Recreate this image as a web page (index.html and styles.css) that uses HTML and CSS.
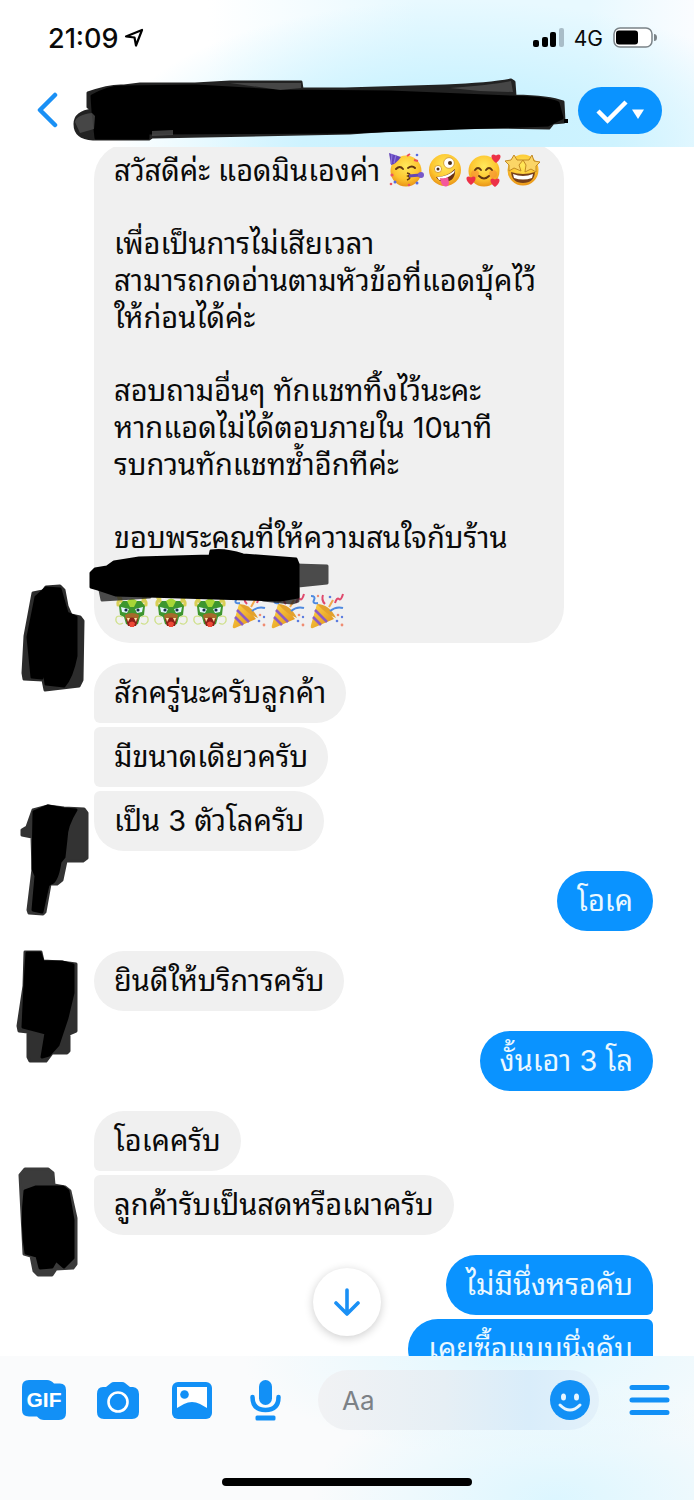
FILE: index.html
```html
<!DOCTYPE html>
<html lang="th">
<head>
<meta charset="utf-8">
<meta name="viewport" content="width=device-width, initial-scale=1">
<title>Chat</title>
<link rel="stylesheet" href="styles.css">
</head>
<body>
<svg class="defs" aria-hidden="true">
  <defs>
    <radialGradient id="gold" cx=".5" cy=".35" r=".7"><stop offset="0" stop-color="#ffe95c"/><stop offset=".6" stop-color="#fdc52f"/><stop offset="1" stop-color="#e58a12"/></radialGradient>
    <linearGradient id="cone" x1="0" y1="0" x2="1" y2="1"><stop offset="0" stop-color="#ffd84a"/><stop offset="1" stop-color="#dd8b16"/></linearGradient>
    <path id="heart" d="M0 5C-7 0-5-6 0-2.500C5-6 7 0 0 5Z" fill="#ec3148"/>
    <symbol id="face-party" viewBox="0 0 36 36">
      <circle cx="18" cy="19" r="15.500" fill="url(#gold)"/>
      <path d="M1 1L13 5Q8 12 3 13Z" fill="#6545ba"/><path d="M4 2L3 12M8 3L6 11" stroke="#8a74e0" stroke-width="1.200"/>
      <path d="M8 17q4-4 7 0M20 16q4-3 7 0" fill="none" stroke="#623611" stroke-width="2" stroke-linecap="round"/>
      <path d="M19 21q5 1 1 3q4 2-1 4" fill="none" stroke="#623611" stroke-width="1.600"/>
      <path d="M21 24L32 23" stroke="#6648b3" stroke-width="3"/><circle cx="33" cy="23" r="3" fill="#7658c9"/>
      <path d="M19 4l3-2M26 8l4 1" stroke="#ee4e57" stroke-width="2"/>
      <g fill="#576be0"><circle cx="29" cy="3" r="1.300"/><circle cx="7" cy="30" r="1.500"/><circle cx="29" cy="31" r="1.500"/></g>
      <g fill="#ed5362"><circle cx="4" cy="23" r="1.600"/><circle cx="3" cy="32" r="1.300"/><circle cx="21" cy="33" r="1.300"/></g>
    </symbol>
    <symbol id="face-zany" viewBox="0 0 36 36">
      <circle cx="18" cy="18" r="16" fill="url(#gold)"/>
      <circle cx="22" cy="11" r="5.400" fill="#fff" stroke="#d9a339"/><circle cx="11" cy="17" r="3.600" fill="#fff" stroke="#d9a339"/>
      <circle cx="23" cy="11" r="2" fill="#4b2c16"/><circle cx="11" cy="17" r="1.500" fill="#4b2c16"/>
      <path d="M9 25Q20 25 28 17Q29 29 18 30Q12 30 9 25Z" fill="#6b3214"/><path d="M10 25Q20 25 28 18L27 21Q20 27 12 28Z" fill="#fff"/>
      <path d="M13 26Q18 27 21 25L22 31Q21 36 17 34Q14 33 13 26Z" fill="#f4589c"/>
    </symbol>
    <symbol id="face-hearts" viewBox="0 0 36 36">
      <circle cx="18" cy="19" r="15.500" fill="url(#gold)"/>
      <circle cx="9" cy="22" r="4" fill="#f58a32" opacity=".6"/><circle cx="27" cy="22" r="4" fill="#f58a32" opacity=".6"/>
      <path d="M9 18q3-4 6 0M20 18q3-4 6 0M13 24q5 5 10 0" fill="none" stroke="#623611" stroke-width="1.900" stroke-linecap="round"/>
      <use href="#heart" x="30" y="6"/><use href="#heart" x="5" y="28"/><use href="#heart" x="29" y="30"/>
    </symbol>
    <symbol id="face-stars" viewBox="0 0 36 36">
      <circle cx="18" cy="18" r="15.500" fill="url(#gold)"/>
      <path d="M9 3l3 5 6 0-4 5 2 6-7-3-5 3 0-6-4-4 6-1ZM27 3l2 6 6 1-4 4 0 6-5-3-6 3 1-7-3-5 6 0Z" fill="#fbd566" stroke="#c28a25" stroke-width="1"/>
      <path d="M6 20Q18 24 30 20Q29 31 18 31Q7 31 6 20Z" fill="#77401b"/><path d="M8 22Q18 26 28 22L27 26Q18 29 9 26Z" fill="#fff"/>
    </symbol>
    <symbol id="dragon" viewBox="0 0 36 36">
      <path d="M4 2q1 7 8 9M32 2q-1 7-8 9M8 5q-5 3-4 7l7 1M28 5q5 3 4 7l-7 1" fill="none" stroke="#d9cf57" stroke-width="3"/>
      <path d="M9 8H27L31 13 30 22 26 24 24 31Q18 34 12 31L10 24 6 22 5 13Z" fill="#3d962f"/>
      <path d="M13 8Q18 3 23 8L20 14H16Z" fill="#a8d637"/>
      <path d="M7 14l8 2-2 4-5-1ZM29 14l-8 2 2 4 5-1Z" fill="#e3f6ff"/><circle cx="12" cy="17" r="1.600" fill="#172c4a"/><circle cx="24" cy="17" r="1.600" fill="#172c4a"/>
      <path d="M11 22q7-4 14 0l-1 5H12Z" fill="#a66a2a"/><path d="M12 26q6-3 12 0l-2 7h-8Z" fill="#8d1f18"/><path d="M13 25l1 4 2-4M20 25l2 4 1-4" fill="#ffe9a8"/><path d="M15 30q3-3 6 0l-1 4h-4Z" fill="#ee4936"/>
      <path d="M9 24q-8-3-7 4q2 5 7 2M27 24q8-3 7 4q-2 5-7 2" fill="none" stroke="#cfe08b" stroke-width="1.300"/>
    </symbol>
    <symbol id="popper" viewBox="0 0 36 36">
      <path d="M8 11Q17 15 25 26L4 35Q1 36 2 32Z" fill="url(#cone)"/>
      <path d="M6 17l12 12M4 24l8 8" stroke="#8d5bc0" stroke-width="2.600"/>
      <path d="M8 11Q20 11 27 25Q18 22 8 11Z" fill="#e3a12c"/>
      <path d="M2 3q5 0 3 4t4 3M21 18q6-5 13-3" fill="none" stroke="#4e8ae0" stroke-width="2"/>
      <path d="M14 2q-2 5 2 9M26 10q2-6 4-4t4-5" fill="none" stroke="#df496c" stroke-width="2"/>
      <path d="M20 14l4-7" stroke="#f0a74b" stroke-width="2"/>
      <g fill="#5c7ce0"><circle cx="21" cy="4" r="1.300"/><circle cx="28" cy="28" r="1.300"/><circle cx="33" cy="24" r="1.200"/></g><g fill="#ef8c72"><circle cx="29" cy="22" r="1.300"/><circle cx="33" cy="32" r="1.400"/><circle cx="9" cy="3" r="1.200"/></g>
    </symbol>
  </defs>
</svg>
<div class="app">
  <header class="header">
    <div class="status">
      <span class="clock">21:09</span>
      <svg class="locate" viewBox="0 0 20 20" aria-hidden="true"><path d="M2 8.500L18 2 12 17.500 10.500 9.500Z" fill="none" stroke="#000" stroke-width="2.200" stroke-linejoin="round"/></svg>
      <span class="spacer"></span>
      <svg class="signal" viewBox="0 0 32 20" aria-hidden="true"><rect y="12" width="6" height="7" rx="2"/><rect x="9" y="9" width="6" height="10" rx="2"/><rect x="17" y="4" width="6" height="15" rx="2"/><rect x="26" width="5" height="19" rx="2" fill="#a9bdc8"/></svg>
      <span class="network">4G</span>
      <svg class="battery" viewBox="0 0 44 22" aria-hidden="true"><rect x="1" y="1" width="38" height="19" rx="6" fill="#fff" stroke="#7b8388" stroke-width="1.500"/><rect x="3" y="3.500" width="22" height="14" rx="3"/><path d="M41 7q3 0 3 3.500T41 14Z" fill="#7b8388"/></svg>
    </div>
    <div class="nav">
      <button class="back" aria-label="Back"><svg viewBox="0 0 22 36"><path d="M18 3L3 18 18 33" fill="none" stroke="#1a90f5" stroke-width="4.500" stroke-linecap="round" stroke-linejoin="round"/></svg></button>
      <svg class="title-mark mark" viewBox="72 74 500 68" preserveAspectRatio="none" aria-hidden="true">
        <path d="M88 91Q110 83 124 84L140 82 195 82 230 80 301 80 302 87 345 87 445 84Q490 82 511 78L514 80 515 94Q550 95 563 100L564 120 553 121 549 126 500 125 420 126 350 131 152 135 149 137 93 137Q75 136 75 122Q75 110 93 108L88 105Z" fill="#222" stroke="#222"/>
        <path d="M92 94Q110 84 124 85L196 84 280 89 390 90 510 95Q550 96 558 101L562 116 548 123 350 130 148 131V136H96L93 109Z" fill="#000" stroke="#000"/>
        <path d="M75 120Q76 113 92 111L95 114 94 127 80 131ZM152 129L173 128V133L152 134ZM230 81L301 81V86L280 88ZM450 86Q490 83 511 79L513 90 480 89Z" fill="#555" opacity=".7"/>
        <path d="M564 117h4v4h-4Z"/>
      </svg>
      <button class="done" aria-label="Done"><svg viewBox="0 0 84 47"><path d="M20 24L29.500 33.500 48 15" fill="none" stroke="#fff" stroke-width="4.500"/><path d="M54 22.500H66L60 32Z" fill="#fff"/></svg></button>
    </div>
  </header>

  <main class="chat">
    <section class="group first">
      <div class="bubble long">
        <p>สวัสดีค่ะ แอดมินเองค่า <svg class="emoji" role="img" aria-label="🥳"><use href="#face-party"/></svg><svg class="emoji" role="img" aria-label="🤪"><use href="#face-zany"/></svg><svg class="emoji" role="img" aria-label="🥰"><use href="#face-hearts"/></svg><svg class="emoji" role="img" aria-label="🤩"><use href="#face-stars"/></svg></p>
        <p>เพื่อเป็นการไม่เสียเวลา<br>สามารถกดอ่านตามหัวข้อที่แอดบุ้คไว้<br>ให้ก่อนได้ค่ะ</p>
        <p>สอบถามอื่นๆ ทักแชททิ้งไว้นะคะ<br>หากแอดไม่ได้ตอบภายใน 10นาที<br>รบกวนทักแชทซ้ำอีกทีค่ะ</p>
        <p>ขอบพระคุณที่ให้ความสนใจกับร้าน<br><br><svg class="emoji" role="img" aria-label="🐲"><use href="#dragon"/></svg><svg class="emoji" role="img" aria-label="🐲"><use href="#dragon"/></svg><svg class="emoji" role="img" aria-label="🐲"><use href="#dragon"/></svg><svg class="emoji" role="img" aria-label="🎉"><use href="#popper"/></svg><svg class="emoji" role="img" aria-label="🎉"><use href="#popper"/></svg><svg class="emoji" role="img" aria-label="🎉"><use href="#popper"/></svg></p>
        <svg class="name-mark mark" viewBox="86 545 250 62" aria-hidden="true">
          <path d="M100 589H150V596L102 599ZM295 564L327 565V582L298 585ZM262 580H298V600L292 602 263 599Z" fill="#222" stroke="#222" opacity=".8"/>
          <path d="M91 572L95 568 107 566 114 561 139 557 210 555 211 550Q225 548 243 554L296 558 298 563 298 596 280 599 180 596 116 594 98 588 91 586Z" stroke="#000"/>
        </svg>
      </div>
      <svg class="avatar-mark mark" viewBox="0 568 94 140" aria-hidden="true"><path d="M33 592L43 590 46 586 60 585 64 589 67 605 71 614 80 616 83 620 82 679 79 685 45 689 43 679 24 678 23 672 25 635Z" fill="#2c2c2c" stroke="#2c2c2c"/><path d="M36 596L46 587 60 588 67 612 76 616 76 655Q72 676 64 685L46 683 44 666 42 677 32 676 28 636Z" stroke="#000"/></svg>
    </section>

    <section class="group">
      <div class="bubble top">สักครู่นะครับลูกค้า</div>
      <div class="bubble mid">มีขนาดเดียวครับ</div>
      <div class="bubble end">เป็น 3 ตัวโลครับ</div>
      <svg class="avatar-mark mark" viewBox="0 776 94 140" aria-hidden="true"><path d="M33 809L48 805 64 807 84 808 87 812 87 857 83 860 66 860 62 879 57 883 50 883 45 911 43 913 29 912 28 909 33 868 32 836 22 834V829L27 826Z" fill="#333" stroke="#333"/><path d="M34 811L48 805 64 808 76 809Q66 825 66 838L64 856 60 861Q57 881 51 882L48 884 42 911 33 909 36 875 33 868Z" stroke="#000"/></svg>
    </section>

    <section class="group mine"><div class="bubble">โอเค</div></section>

    <section class="group">
      <div class="bubble">ยินดีให้บริการครับ</div>
      <svg class="avatar-mark mark" viewBox="0 936 94 140" aria-hidden="true"><path d="M25 951H41L43 960 61 961 76 963V1030L69 1033V1050L67 1052 52 1052 46 1060 30 1060 28 1056 28 1031 19 1030 18 1025 24 985Z" fill="#303030" stroke="#303030"/><path d="M27 952H40L43 961H62L73 964V992L67 1017 58 1044 49 1054 42 1056 46 1032 23 1026 25 983Z" stroke="#000"/></svg>
    </section>

    <section class="group mine"><div class="bubble">งั้นเอา 3 โล</div></section>

    <section class="group">
      <div class="bubble top">โอเคครับ</div>
      <div class="bubble end">ลูกค้ารับเป็นสดหรือเผาครับ</div>
      <svg class="avatar-mark mark" viewBox="0 1161 94 140" aria-hidden="true"><path d="M25 1169H48L53 1173 54 1185 65 1187 70 1191 76 1218 76 1264 73 1268 56 1269 52 1275 38 1275 34 1271 31 1256 24 1254 20 1175Z" fill="#3b3b3b" stroke="#3b3b3b"/><path d="M25 1191L36 1187H63L68 1191 73 1220V1258L64 1267 56 1260 52 1267 40 1268 37 1256 26 1253Q21 1225 25 1191Z" stroke="#000"/></svg>
    </section>

    <section class="group mine">
      <div class="bubble top">ไม่มีนึ่งหรอคับ</div>
      <div class="bubble mid">เคยซื้อแบบนึ่งคับ</div>
    </section>

    <button class="scroll-down" aria-label="Scroll to latest"><svg viewBox="0 0 28 28"><path d="M14 2V26M3 15L14 26 25 15" fill="none" stroke="#1a90f5" stroke-width="3.600" stroke-linecap="round" stroke-linejoin="round"/></svg></button>
  </main>

  <footer class="composer">
    <div class="tools">
      <button class="tool" aria-label="GIF"><svg viewBox="0 0 44 42"><path d="M7 1H25Q29 1 32 4.500H38Q44 4.500 44 11V34Q44 41 37 41H22Q18 41 15 37.500H7Q0 37.500 0 31V8Q0 1 7 1Z" fill="#1290f6"/><text class="gif" x="22" y="28" text-anchor="middle">GIF</text></svg></button>
      <button class="tool" aria-label="Camera"><svg viewBox="0 0 44 42"><path d="M7 8H10L15 4Q16 3 18 3H26Q28 3 29 4L34 8H37Q43 9 43 15V33Q43 40 36 40H8Q1 40 1 33V15Q1 8 7 8Z" fill="#1290f6"/><circle cx="22" cy="23" r="9.500" fill="none" stroke="#fff" stroke-width="2.600"/></svg></button>
      <button class="tool" aria-label="Photo"><svg viewBox="0 0 44 42"><rect x="2" y="3" width="40" height="37" rx="6" fill="#1290f6"/><path d="M7 8H37V29L30 25Q22 21 14 25L7 29Z" fill="#fff"/><circle cx="14.500" cy="15.500" r="4.300" fill="#1290f6"/></svg></button>
      <button class="tool" aria-label="Voice"><svg viewBox="0 0 44 42"><rect x="15" y="1" width="13" height="25" rx="6.500" fill="#1290f6"/><path d="M8.500 18Q8.500 31 21.500 31T34.500 18" fill="none" stroke="#1290f6" stroke-width="4.500" stroke-linecap="round"/><rect x="11.500" y="36.500" width="20" height="5" rx="1.500" fill="#1290f6"/></svg></button>
      <div class="field">
        <input type="text" placeholder="Aa" aria-label="Message">
        <button class="smile" aria-label="Emoji"><svg viewBox="0 0 40 40"><circle cx="20" cy="20" r="20" fill="#1290f6"/><ellipse cx="13.500" cy="17" rx="2.500" ry="3.500" fill="#e8f6ff"/><ellipse cx="26.500" cy="17" rx="2.500" ry="3.500" fill="#e8f6ff"/><path d="M10 25Q20 35 30 25" fill="none" stroke="#e8f6ff" stroke-width="3" stroke-linecap="round"/></svg></button>
      </div>
      <button class="menu" aria-label="Menu"><svg viewBox="0 0 40 32"><path d="M2.500 3.500H37.500M2.500 16H37.500M2.500 28.500H37.500" stroke="#1290f6" stroke-width="5" stroke-linecap="round"/></svg></button>
    </div>
    <div class="home"></div>
  </footer>
</div>
</body>
</html>
```
FILE: styles.css
```css
* { box-sizing: border-box; }
body {
  margin: 0;
  background: #fff;
  color: #0a0a0a;
  font-family: Inter, "Noto Sans Thai Looped", "Noto Looped Thai", Loma, Garuda, "Noto Sans Thai", "Noto Sans", sans-serif;
}
button { border: 0; padding: 0; background: none; cursor: pointer; }
button svg { display: block; }
p { margin: 0; }
.defs { position: absolute; width: 0; height: 0; }

.app { display: flex; flex-direction: column; height: 100vh; overflow: hidden; }

.header {
  position: relative;
  z-index: 1;
  flex: none;
  height: 147px;
  padding-top: 22px;
  background:
    radial-gradient(ellipse 50% 100% at 66% 100%, #c6f1ff 0%, #cef3ff 45%, rgba(214, 245, 255, 0) 100%),
    linear-gradient(90deg, #fff 30%, #e8f9ff 60%, #e8f9ff 85%, #fafcff 100%);
}
.status { display: flex; align-items: center; height: 32px; padding: 0 37px 0 48px; }
.clock { font-size: 27px; font-weight: 500; }
.locate { width: 20px; height: 20px; margin-left: 6px; }
.spacer { flex: 1; }
.signal { width: 32px; height: 20px; }
.network { margin: 0 10px 0 9px; font-size: 21px; }
.battery { width: 44px; height: 22px; }

.nav { display: flex; align-items: center; height: 64px; margin-top: 24px; padding: 0 32px 0 37px; }
.back svg { width: 22px; height: 36px; }
.title-mark { flex: 1; min-width: 0; height: 68px; margin: 0 6px 0 13px; }
.mark { stroke-width: 3px; stroke-linejoin: round; }
.done { height: 47px; border-radius: 24px; background: #0a93ff; }
.done svg { width: 84px; height: 47px; }

.chat {
  position: relative;
  display: flex;
  flex: 1;
  flex-direction: column;
  gap: 20px;
  min-height: 0;
  overflow: hidden;
}
.group {
  position: relative;
  display: flex;
  flex: none;
  flex-direction: column;
  align-items: flex-start;
  gap: 4px;
  padding: 0 41px 0 94px;
}
.first { margin-top: -4px; }
.mine { align-items: flex-end; }
.bubble {
  position: relative;
  padding: 12px 20px;
  border-radius: 30px;
  background: #f0f0f0;
  font-size: 29px;
  line-height: 36px;
  white-space: nowrap;
}
.long { display: grid; gap: 36px; padding: 9px 20px 13px; border-radius: 36px; line-height: 37px; }
.top { border-bottom-left-radius: 6px; }
.mid { border-top-left-radius: 6px; border-bottom-left-radius: 6px; }
.end { border-top-left-radius: 6px; }
.mine .bubble { border-radius: 30px; background: #0a93ff; color: #eaf8ff; }
.mine .top { border-bottom-right-radius: 6px; }
.mine .mid { border-top-right-radius: 6px; border-bottom-right-radius: 6px; }
.emoji { width: 36px; height: 36px; margin-right: 3px; vertical-align: top; }
.name-mark { position: absolute; left: -8px; bottom: 35px; width: 250px; height: 62px; }
.avatar-mark { position: absolute; left: 0; bottom: -66px; z-index: 1; width: 94px; height: 140px; }

.scroll-down {
  position: absolute;
  bottom: 20px;
  left: 50%;
  display: grid;
  place-items: center;
  width: 68px;
  height: 68px;
  margin-left: -34px;
  border-radius: 50%;
  background: #fff;
  box-shadow: 0 2px 10px rgba(0, 0, 0, .2);
}
.scroll-down svg { width: 28px; height: 28px; }

.composer {
  display: flex;
  flex: none;
  flex-direction: column;
  align-items: center;
  justify-content: space-between;
  height: 144px;
  padding: 14px 0;
  background:
    radial-gradient(ellipse 35% 80% at 80% 100%, #dcf6ff, rgba(230, 249, 255, 0)),
    radial-gradient(ellipse 40% 70% at 75% 0%, #e0f7ff, rgba(240, 251, 255, 0)),
    #fafbfc;
}
.tools { display: flex; align-items: center; width: 100%; padding: 0 24px 0 22px; }
.tool { margin-right: 30px; }
.tool svg { width: 44px; height: 42px; }
.gif { fill: #fff; font-size: 21px; font-weight: 700; }
.field {
  display: flex;
  flex: 1;
  align-items: center;
  min-width: 0;
  height: 60px;
  margin-right: 30px;
  padding: 0 9px 0 24px;
  border-radius: 30px;
  background: linear-gradient(90deg, #f1f2f4, #e6eff5 45%, #d9edfa 75%, #e3f1fa);
}
.field input {
  flex: 1;
  min-width: 0;
  padding: 0;
  border: 0;
  outline: 0;
  background: none;
  color: #222;
  font: 26px Inter, sans-serif;
}
.field input::placeholder { color: #7c8186; opacity: 1; }
.smile svg { width: 40px; height: 40px; }
.menu svg { width: 41px; height: 32px; }
.home { width: 36%; height: 8px; border-radius: 4px; background: #000; }
```
